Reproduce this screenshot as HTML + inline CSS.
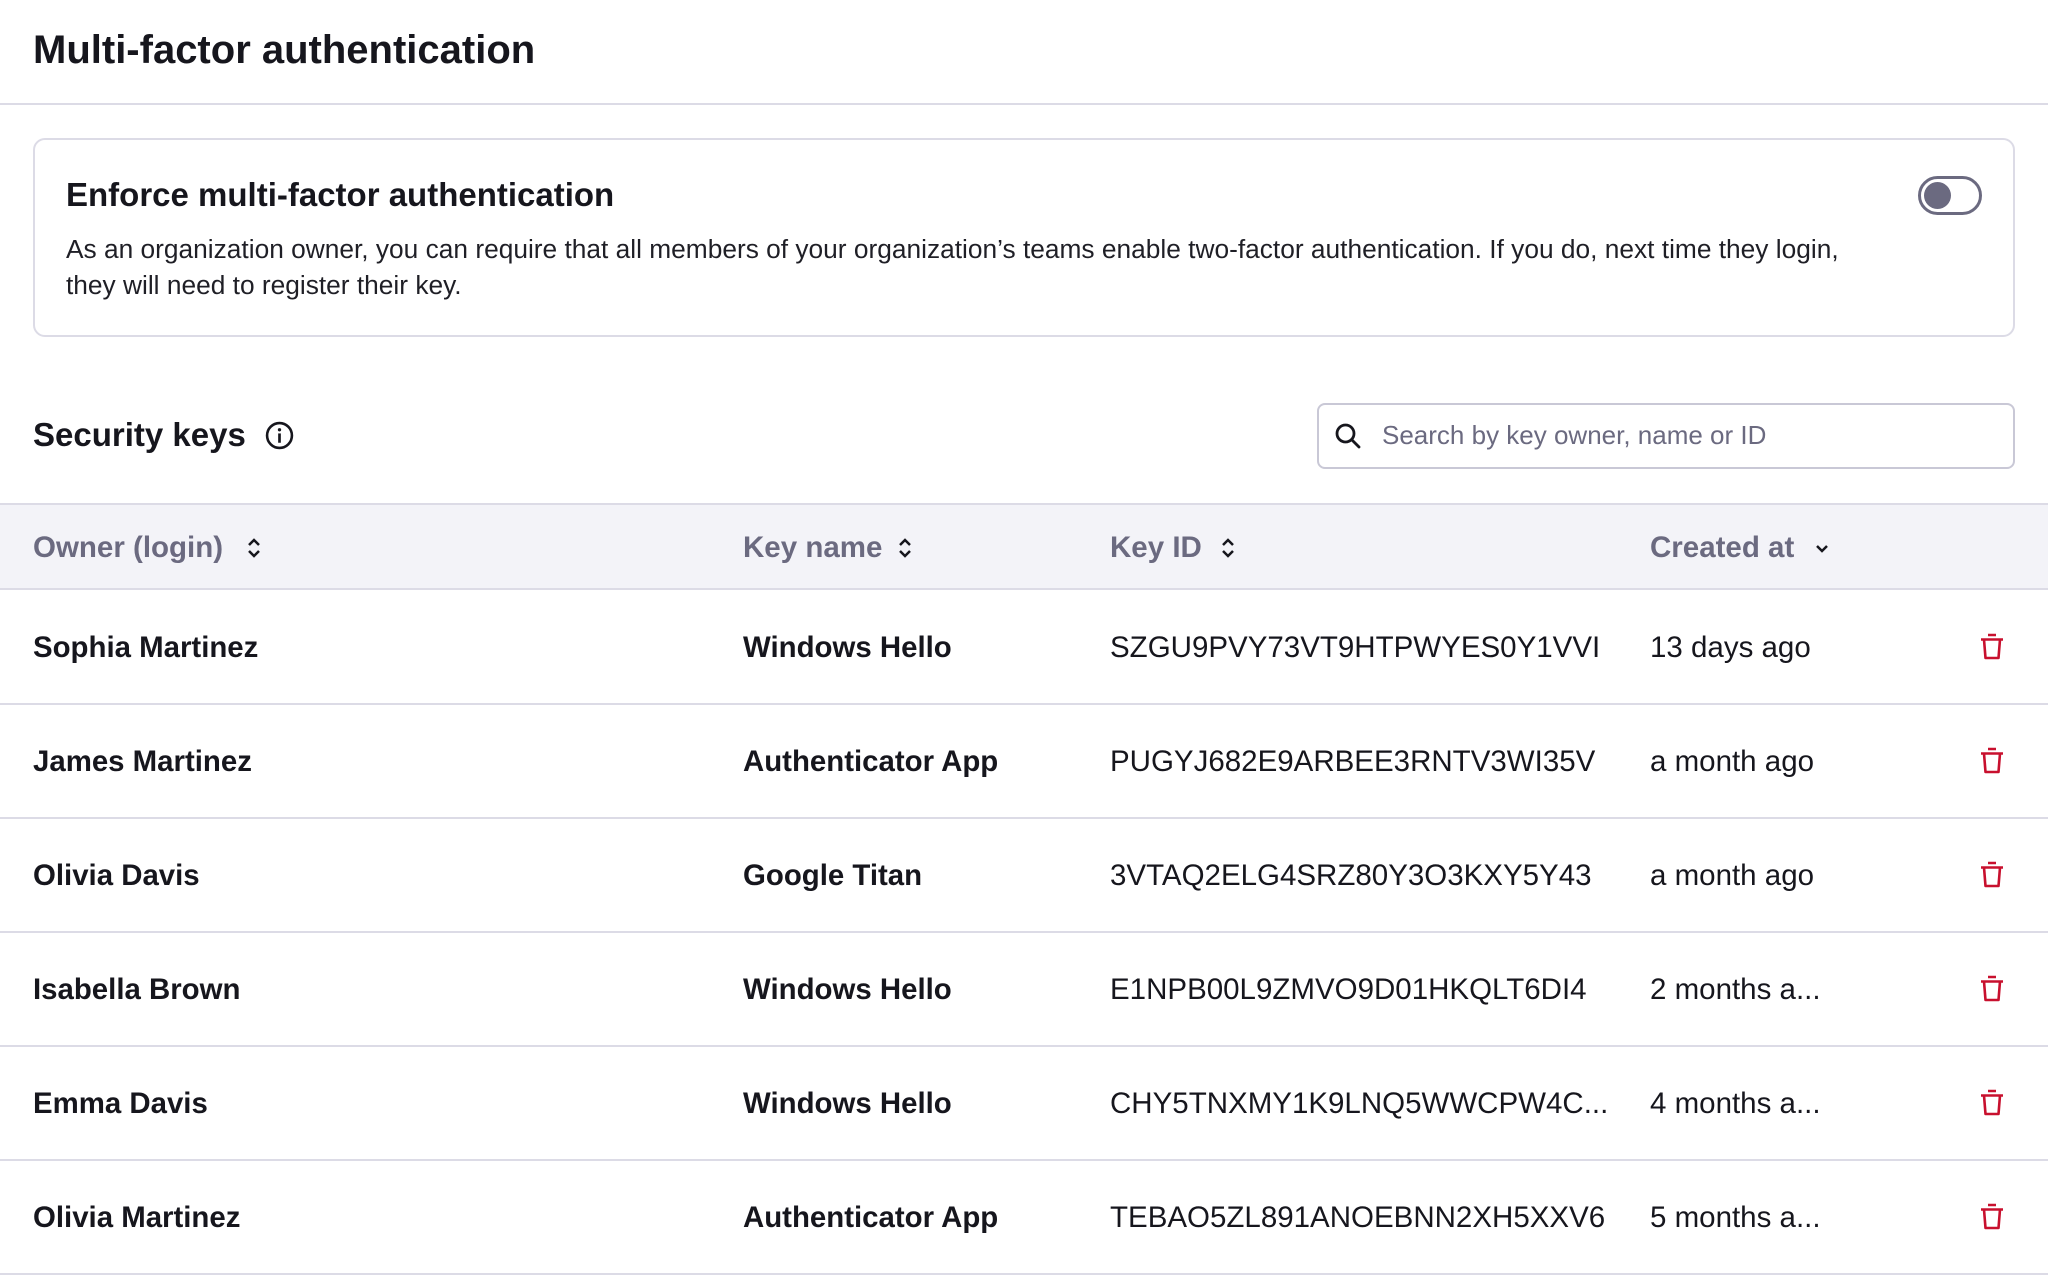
<!DOCTYPE html>
<html><head><style>
*{margin:0;padding:0;box-sizing:border-box}
body{width:2048px;height:1280px;background:#fff;font-family:"Liberation Sans",sans-serif;color:#16161d;position:relative;overflow:hidden}
.a{position:absolute;white-space:nowrap}
.t{font-size:40px;font-weight:bold;left:33px;top:28px}
.hr{position:absolute;left:0;width:2048px;height:2px;background:#dcdbe6}
.card{position:absolute;left:33px;top:138px;width:1982px;height:199px;border:2px solid #dcdbe6;border-radius:12px}
.h{font-size:33px;font-weight:bold}
.p{font-size:26.3px;line-height:36px;color:#1f1f26}
.th{font-size:29.5px;font-weight:bold;color:#6b6a80}
.b{font-size:29.4px;font-weight:bold}
.r{font-size:29.5px}
</style></head><body>
<div class="a t">Multi-factor authentication</div>
<div class="hr" style="top:103px"></div>
<div class="card"></div>
<div class="a h" style="left:66px;top:176px">Enforce multi-factor authentication</div>
<div class="a p" style="left:66px;top:231px">As an organization owner, you can require that all members of your organization’s teams enable two-factor authentication. If you do, next time they login,<br>they will need to register their key.</div>
<div class="a" style="left:1918px;top:176px;width:64px;height:39px;border:3px solid #6b6a80;border-radius:20px"><div style="position:absolute;left:3px;top:3px;width:27px;height:27px;border-radius:50%;background:#6b6a80"></div></div>
<div class="a h" style="left:33px;top:416px">Security keys</div>
<svg class="a" style="left:265px;top:421px" width="29" height="29" viewBox="0 0 28 28"><circle cx="14" cy="14" r="12" fill="none" stroke="#16161d" stroke-width="2.5"/><rect x="12.7" y="12" width="2.6" height="9" fill="#16161d"/><circle cx="14" cy="8.5" r="1.6" fill="#16161d"/></svg>
<div class="a" style="left:1317px;top:403px;width:698px;height:66px;border:2px solid #c9c8d6;border-radius:8px"></div>
<svg class="a" style="left:1334px;top:422px" width="28" height="28" viewBox="0 0 28 28"><circle cx="11.5" cy="11.5" r="8.5" fill="none" stroke="#16161d" stroke-width="2.8"/><line x1="18" y1="18" x2="25" y2="25" stroke="#16161d" stroke-width="2.8" stroke-linecap="round"/></svg>
<div class="a" style="left:1382px;top:420px;font-size:26px;color:#6b6a80">Search by key owner, name or ID</div>
<div class="a" style="left:0;top:503px;width:2048px;height:87px;background:#f3f3f8;border-top:2px solid #dcdbe6;border-bottom:2px solid #dcdbe6"></div>
<div class="a th" style="left:33px;top:531px">Owner (login)</div>
<div class="a th" style="left:743px;top:531px">Key name</div>
<div class="a th" style="left:1110px;top:531px">Key ID</div>
<div class="a th" style="left:1650px;top:531px">Created at</div>
<svg class="a" style="left:246px;top:536px" width="16" height="24" viewBox="0 0 16 24"><path d="M3 9l5-5 5 5M3 15l5 5 5-5" fill="none" stroke="#16161d" stroke-width="2.5"/></svg>
<svg class="a" style="left:897px;top:536px" width="16" height="24" viewBox="0 0 16 24"><path d="M3 9l5-5 5 5M3 15l5 5 5-5" fill="none" stroke="#16161d" stroke-width="2.5"/></svg>
<svg class="a" style="left:1220px;top:536px" width="16" height="24" viewBox="0 0 16 24"><path d="M3 9l5-5 5 5M3 15l5 5 5-5" fill="none" stroke="#16161d" stroke-width="2.5"/></svg>
<svg class="a" style="left:1814px;top:536px" width="16" height="24" viewBox="0 0 16 24"><path d="M3 10l5 5 5-5" fill="none" stroke="#16161d" stroke-width="2.5"/></svg>
<div id="rows"></div>
<script>
var d=[["Sophia Martinez","Windows Hello","SZGU9PVY73VT9HTPWYES0Y1VVI","13 days ago"],["James Martinez","Authenticator App","PUGYJ682E9ARBEE3RNTV3WI35V","a month ago"],["Olivia Davis","Google Titan","3VTAQ2ELG4SRZ80Y3O3KXY5Y43","a month ago"],["Isabella Brown","Windows Hello","E1NPB00L9ZMVO9D01HKQLT6DI4","2 months a..."],["Emma Davis","Windows Hello","CHY5TNXMY1K9LNQ5WWCPW4C...","4 months a..."],["Olivia Martinez","Authenticator App","TEBAO5ZL891ANOEBNN2XH5XXV6","5 months a..."]];
var h="";
d.forEach(function(r,i){var y=590+i*114;var c=y+57;
h+='<div class="a b" style="left:33px;top:'+(c-16)+'px">'+r[0]+'</div>';
h+='<div class="a b" style="left:743px;top:'+(c-16)+'px">'+r[1]+'</div>';
h+='<div class="a r" style="left:1110px;top:'+(c-16)+'px">'+r[2]+'</div>';
h+='<div class="a r" style="left:1650px;top:'+(c-16)+'px">'+r[3]+'</div>';
h+='<svg class="a" style="left:1979px;top:'+(c-14)+'px" width="26" height="28" viewBox="0 0 26 28"><path d="M9 2h8M2 6.5h22M5 6.5l1.5 18.5h13L21 6.5" fill="none" stroke="#c8102e" stroke-width="2.6" stroke-linejoin="round"/></svg>';
h+='<div class="hr" style="top:'+(y+113)+'px"></div>';});
document.getElementById("rows").innerHTML=h;
</script>
</body></html>
